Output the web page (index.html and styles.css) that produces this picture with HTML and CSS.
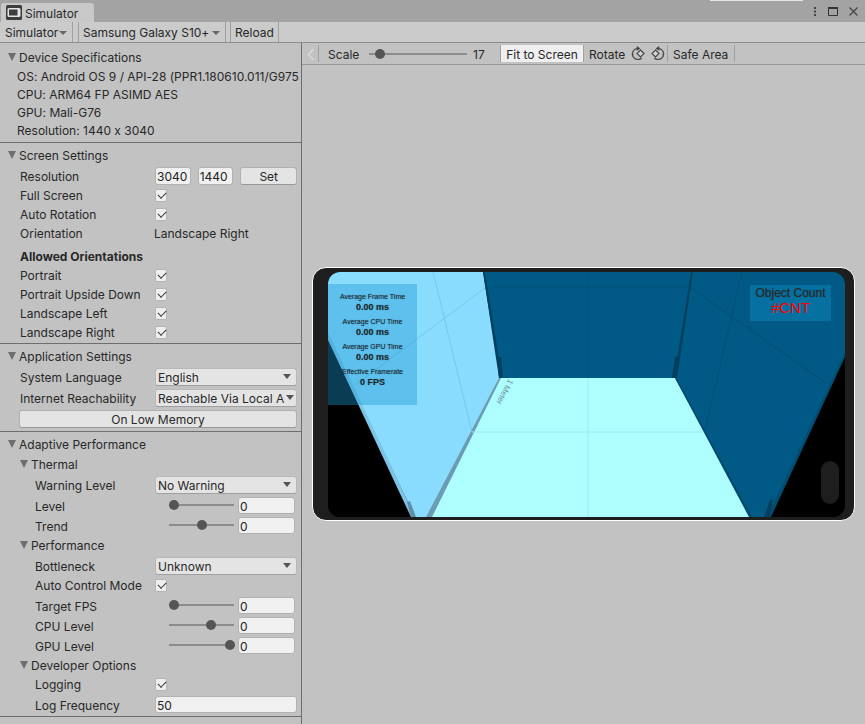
FILE: index.html
```html
<!DOCTYPE html>
<html lang="en">
<head>
<meta charset="utf-8">
<title>Simulator</title>
<link rel="stylesheet" href="styles.css">
</head>
<body>
<div class="window">
  <header class="tabbar">
    <div class="tab">
      <svg class="tab-icon" width="16" height="15" viewBox="0 0 16 15"><rect width="16" height="15" rx="1.5" fill="#3d3d3d"/><rect x="1.500" y="3" width="13" height="9" rx="1.5" fill="#e4e4e4"/><rect x="3" y="4.500" width="8.500" height="6" fill="#3d3d3d"/></svg>
      <span class="tab-label">Simulator</span>
    </div>
    <span class="bleed"></span>
    <div class="win-icons">
      <svg width="4" height="9" viewBox="0 0 4 9"><rect x="1" y="0" width="2" height="2" fill="#444"/><rect x="1" y="3.500" width="2" height="2" fill="#444"/><rect x="1" y="7" width="2" height="2" fill="#444"/></svg>
      <svg width="10" height="9" viewBox="0 0 10 9"><path d="M.5.5h9v8h-9z" fill="none" stroke="#333" stroke-width="1"/><rect y="0" width="10" height="2" fill="#333"/></svg>
      <svg width="9" height="9" viewBox="0 0 9 9"><path d="M.5.5l8 8M8.500.5l-8 8" stroke="#444" stroke-width="1.200" fill="none"/></svg>
    </div>
  </header>

  <nav class="toolbar">
    <div class="tool tool-sim">Simulator<i class="caret small"></i></div>
    <div class="tool tool-device">Samsung Galaxy S10+<i class="caret small"></i></div>
    <div class="tool tool-reload">Reload</div>
  </nav>

  <div class="content">
    <aside class="side">
      <section class="sec sec-device">
        <div class="head"><i class="tri"></i>Device Specifications</div>
        <div class="info">OS: Android OS 9 / API-28 (PPR1.180610.011/G975</div>
        <div class="info">CPU: ARM64 FP ASIMD AES</div>
        <div class="info">GPU: Mali-G76</div>
        <div class="info">Resolution: 1440 x 3040</div>
      </section>

      <section class="sec sec-screen">
        <div class="head"><i class="tri"></i>Screen Settings</div>
        <div class="row r21"><span class="lab">Resolution</span><span class="num w35">3040</span><span class="num w35 gap8">1440</span><span class="btn set">Set</span></div>
        <div class="row"><span class="lab">Full Screen</span><i class="check"></i></div>
        <div class="row"><span class="lab">Auto Rotation</span><i class="check"></i></div>
        <div class="row"><span class="lab">Orientation</span><span class="plain">Landscape Right</span></div>
        <div class="row allowed"><b class="lab">Allowed Orientations</b></div>
        <div class="row"><span class="lab">Portrait</span><i class="check"></i></div>
        <div class="row"><span class="lab">Portrait Upside Down</span><i class="check"></i></div>
        <div class="row"><span class="lab">Landscape Left</span><i class="check"></i></div>
        <div class="row"><span class="lab">Landscape Right</span><i class="check"></i></div>
      </section>

      <section class="sec">
        <div class="head"><i class="tri"></i>Application Settings</div>
        <div class="row r21"><span class="lab">System Language</span><span class="select">English<i class="caret"></i></span></div>
        <div class="row r21"><span class="lab">Internet Reachability</span><span class="select tight">Reachable Via Local A<i class="caret"></i></span></div>
        <div class="row r21"><span class="btn wide">On Low Memory</span></div>
      </section>

      <section class="sec sec-adaptive">
        <div class="head"><i class="tri"></i>Adaptive Performance</div>
        <div class="head sub"><i class="tri"></i>Thermal</div>
        <div class="row r21 deep"><span class="lab">Warning Level</span><span class="select">No Warning<i class="caret"></i></span></div>
        <div class="row r20 deep"><span class="lab">Level</span><span class="slider"><i class="thumb t-min"></i></span><span class="num val">0</span></div>
        <div class="row r20 deep"><span class="lab">Trend</span><span class="slider"><i class="thumb t-mid"></i></span><span class="num val">0</span></div>
        <div class="head sub"><i class="tri"></i>Performance</div>
        <div class="row r21 deep"><span class="lab">Bottleneck</span><span class="select">Unknown<i class="caret"></i></span></div>
        <div class="row deep"><span class="lab">Auto Control Mode</span><i class="check"></i></div>
        <div class="row r20 deep"><span class="lab">Target FPS</span><span class="slider"><i class="thumb t-min"></i></span><span class="num val">0</span></div>
        <div class="row r20 deep"><span class="lab">CPU Level</span><span class="slider"><i class="thumb t-cpu"></i></span><span class="num val">0</span></div>
        <div class="row r20 deep"><span class="lab">GPU Level</span><span class="slider"><i class="thumb t-max"></i></span><span class="num val">0</span></div>
        <div class="head sub"><i class="tri"></i>Developer Options</div>
        <div class="row deep"><span class="lab">Logging</span><i class="check"></i></div>
        <div class="row r21 deep"><span class="lab">Log Frequency</span><span class="num freq">50</span></div>
      </section>
    </aside>

    <main class="main">
      <div class="viewbar">
        <svg class="chev" width="8" height="13" viewBox="0 0 8 13"><path d="M6.500 1L1.500 6.500l5 5.500" fill="none" stroke="#dcdcdc" stroke-width="1.200"/></svg>
        <span class="vsep v1"></span>
        <span class="scale-lab">Scale</span>
        <span class="scale-track"><i class="scale-thumb"></i></span>
        <span class="scale-val">17</span>
        <span class="fit">Fit to Screen</span>
        <span class="rotate">Rotate</span>
        <svg class="rot" width="15" height="15" viewBox="0 0 15 15"><path d="M6.500 2.300A5.600 5.600 0 1 0 10.800 12" fill="none" stroke="#444" stroke-width="1.200"/><path d="M5.800 0l3.600 2.400-3.600 2.400z" fill="#444"/><path d="M9.500 4l3.500 3.500-3.500 3.500L6 7.500z" fill="#d4d4d4" stroke="#444" stroke-width="1.100"/></svg>
        <svg class="rot rot2" width="15" height="15" viewBox="0 0 15 15"><path d="M8.500 2.300A5.600 5.600 0 1 1 4.200 12" fill="none" stroke="#444" stroke-width="1.200"/><path d="M9.200 0L5.600 2.400l3.600 2.400z" fill="#444"/><path d="M5.500 4L9 7.500 5.500 11 2 7.500z" fill="#d4d4d4" stroke="#444" stroke-width="1.100"/></svg>
        <span class="vsep"></span>
        <span class="safe">Safe Area</span>
        <span class="vsep"></span>
      </div>
      <div class="stage">
        <div class="phone">
          <div class="screen">
            <svg class="scene" width="517" height="245" viewBox="328 272 517 245">
              <rect x="328" y="272" width="517" height="245" fill="#000"/>
              <polygon points="483,272 692,272 675,378 500,378" fill="#005a85"/>
              <polygon points="328,272 483,272 500,378 428,517 415,517 328,335" fill="#8adcff"/>
              <polygon points="328,332 415,517 411,517 328,340" fill="#7cc5e6"/>
              <polygon points="692,272 845,272 845,354 770,517 751,517 675,378" fill="#005a85"/>
              <polygon points="500,378 675,378 751,517 428,517" fill="#aefdff"/>
              <polygon points="499,378 501,378 432,517 426,517" fill="#6c9cb4"/>
              <polygon points="483,272 485,272 502,378 499,378" fill="#00405f"/>
              <polygon points="691,272 693,272 677,378 674,378" fill="#00405f"/>
              <polygon points="675,378 677,379 752,517 749,517" fill="#004a6e"/>
              <polygon points="845,352 845,357 771,517 767,517" fill="#024e73"/>
              <polygon points="497,357 501,357 503,378 499,378" fill="#00405f"/>
              <polygon points="675,357 679,356 676,378 672,378" fill="#00405f"/>
              <polygon points="407,502 410,501 416,517 411,517" fill="#5f8fa8"/>
              <polygon points="770,500 773,499 770,517 764,517" fill="#00405f"/>
              <g fill="none" stroke-width="1">
                <path d="M433 272L472 432M485 288L355 385" stroke="#74c6ea"/>
                <path d="M472 432H703M588 378V517" stroke="#9ee8f6"/>
                <path d="M486 287H692" stroke="#034f75"/>
                <path d="M587 272V378" stroke="#01547d"/>
                <path d="M742 272L705 430M690 287L827 384" stroke="#034f75"/>
              </g>
            </svg>
            <span class="meter">1 Meter</span>
            <div class="stats">
              <small>Average Frame Time</small><strong>0.00 ms</strong>
              <small>Average CPU Time</small><strong>0.00 ms</strong>
              <small>Average GPU Time</small><strong>0.00 ms</strong>
              <small>Effective Framerate</small><strong>0 FPS</strong>
            </div>
            <div class="count"><span>Object Count</span><em>#CNT</em></div>
            <div class="cutout"></div>
          </div>
        </div>
      </div>
    </main>
  </div>
</div>
</body>
</html>
```

FILE: styles.css
```css
* { box-sizing: border-box; }
html, body { margin: 0; height: 100%; }
body { background: #c2c2c2; font: 12px/1 Inter, "Liberation Sans", sans-serif; font-feature-settings: "calt" 0; color: #282828; overflow: hidden; }
i { display: block; font-style: normal; }
.window { width: 865px; height: 724px; display: flex; flex-direction: column; overflow: hidden; position: relative; }

.tabbar { height: 22px; flex: none; background: #a3a3a3; display: flex; justify-content: space-between; padding: 3px 0 0 1px; }
.tab { width: 93px; height: 19px; background: #c8c8c8; border-radius: 3px 3px 0 0; display: flex; align-items: flex-start; gap: 3px; padding: 2px 0 0 5px; }
.tab-icon { flex: none; }
.tab-label { padding-top: 3px; }
.bleed { position: absolute; left: 710px; top: 0; width: 93px; height: 1px; background: #e6e6e6; }
.win-icons { display: flex; align-items: center; height: 9px; margin-top: 4px; padding-right: 7px; gap: 11px; }

.toolbar { height: 21px; flex: none; background: #cbcbcb; border-bottom: 1px solid #8e8e8e; display: flex; }
.tool { height: 20px; display: flex; align-items: center; border-right: 1px solid #a0a0a0; padding-top: 2px; }
.tool-sim { width: 73px; padding-left: 5px; }
.tool-device { margin-left: 5px; width: 148px; padding-left: 4px; border-left: 1px solid #a0a0a0; }
.tool-reload { margin-left: 4px; width: 49px; padding-left: 4px; border-left: 1px solid #a0a0a0; }
.caret { width: 0; height: 0; border-left: 4px solid transparent; border-right: 4px solid transparent; border-top: 5px solid #555; margin-left: auto; }
.caret.small { margin: 0 5px 0 auto; border-left-width: 4px; border-right-width: 4px; border-top-width: 4px; border-top-color: #666; }

.content { flex: 1; display: flex; min-height: 0; }
.side { width: 302px; flex: none; border-right: 1px solid #6e6e6e; }
.sec { border-bottom: 1px solid #6e6e6e; padding: 2px 4px 2px 0; }
.sec-device { padding: 4px 0 3px; white-space: nowrap; }
.sec-screen { padding-bottom: 1px; }
.sec-adaptive { padding-bottom: 1px; }

.head { height: 20px; display: flex; align-items: center; padding: 2px 0 0 8px; }
.head.sub { padding-left: 20px; }
.tri { width: 0; height: 0; border-left: 4px solid transparent; border-right: 4px solid transparent; border-top: 8px solid #6e6e6e; margin: 0 3px 2px 0; }
.info { height: 18px; line-height: 18px; padding: 1px 0 0 17px; }

.row { height: 19px; display: flex; align-items: center; padding-left: 20px; white-space: nowrap; }
.r20 { height: 20px; }
.r21 { height: 21px; }
.row.deep { padding-left: 35px; }
.allowed { margin-top: 4px; }
.lab { flex: none; width: 135px; }
.r21 .lab { padding-top: 2px; }
.r20 .lab { padding-top: 4px; }
.deep .lab { width: 120px; }
b.lab { font-weight: 700; width: auto; }
.plain { margin-left: -1px; }

.check { width: 12px; height: 13px; background: #efefef; border: 1px solid #b4b4b4; border-radius: 2px; position: relative; }
.check::after { content: ""; position: absolute; left: 2px; top: 2px; width: 6.500px; height: 3.500px; border-left: 1.300px solid #333; border-bottom: 1.300px solid #333; transform: rotate(-45deg); }

.num { height: 17px; background: #f0f0f0; border: 1px solid #b2b2b2; border-radius: 3px; display: flex; align-items: center; padding: 2px 0 0 1px; color: #222; }
.w35 { width: 36px; height: 18px; }
.gap8 { margin-left: 7px; }
.val { width: 57px; margin-left: 4px; padding-top: 4px; }
.freq { width: 142px; }
.btn { height: 18px; background: #e4e4e4; border: 1px solid #b0b0b0; border-bottom-color: #999; border-radius: 3px; display: flex; align-items: center; justify-content: center; padding-top: 2px; }
.set { width: 57px; margin-left: 7px; }
.wide { width: 278px; margin-left: -1px; }
.select { width: 142px; height: 18px; background: #e4e4e4; border: 1px solid #b8b8b8; border-bottom-color: #a0a0a0; border-radius: 3px; display: flex; align-items: center; padding: 2px 5px 0 2px; }
.select .caret { margin-left: auto; margin-top: -2px; }
.select.tight { padding-right: 1px; }
.select.tight .caret { margin-left: 2px; }

.slider { width: 65px; height: 2px; background: #8c8c8c; margin-left: 14px; position: relative; }
.thumb { width: 10px; height: 10px; border-radius: 50%; background: #555; position: absolute; top: -4px; }
.t-min { left: 0; }
.t-mid { left: 28px; }
.t-cpu { left: 37px; }
.t-max { left: 56px; }

.main { flex: 1; min-width: 0; display: flex; flex-direction: column; }
.viewbar { height: 22px; flex: none; border-bottom: 1px solid #9a9a9a; display: flex; align-items: center; padding-left: 5px; }
.chev { flex: none; margin-top: 1px; }
.vsep { width: 1px; height: 17px; background: #a0a0a0; flex: none; }
.v1 { margin-left: 3px; }
.scale-lab { margin-left: 9px; padding-top: 3px; width: 41px; }
.scale-track { width: 98px; height: 2px; background: #8c8c8c; position: relative; }
.scale-thumb { position: absolute; left: 6px; top: -4px; width: 10px; height: 10px; border-radius: 50%; background: #555; }
.scale-val { margin-left: 6px; width: 27px; padding-top: 3px; }
.fit { width: 84px; height: 17px; padding-top: 3px; background: #efefef; border-left: 1px solid #a0a0a0; border-right: 1px solid #a0a0a0; display: flex; align-items: center; justify-content: center; }
.rotate { margin-left: 5px; width: 42px; padding-top: 3px; }
.rot { flex: none; }
.rot2 { margin-left: 4px; margin-right: 2px; }
.safe { width: 66px; padding: 3px 0 0 5px; }

.stage { flex: 1; display: flex; align-items: center; justify-content: center; padding-bottom: 1px; }
.phone { width: 543px; height: 254px; background: #1e1e1e; border: 1px solid #fff; border-radius: 14px; padding: 4px 9px 4px 15px; }
.screen { width: 517px; height: 245px; position: relative; border-radius: 12px; overflow: hidden; background: #000; }
.scene { display: block; }
.meter { position: absolute; left: 187px; top: 110px; font: 8px "Liberation Sans", sans-serif; color: #6a8ea0; transform: rotate(118deg); transform-origin: 0 0; white-space: nowrap; }
.stats { position: absolute; left: 0; top: 12px; width: 89px; height: 121px; background: rgba(25,150,209,.4); display: flex; flex-direction: column; align-items: center; padding-top: 7px; font-family: "Liberation Sans", sans-serif; color: #1f2a30; text-shadow: 0 0 1px rgba(20,30,40,.45); }
.stats small { font-size: 7px; height: 11px; line-height: 11px; }
.stats strong { font-size: 9px; font-weight: 700; height: 11px; line-height: 11px; margin-bottom: 3px; }
.count { position: absolute; left: 422px; top: 13px; width: 81px; height: 36px; background: #0670a0; display: flex; flex-direction: column; align-items: center; padding-top: 2px; font-family: "Liberation Sans", sans-serif; font-size: 12px; line-height: 13px; color: #2a2a2a; text-shadow: 0 0 1px rgba(30,30,30,.5); }
.count em { font-style: normal; font-size: 15px; color: #f00; line-height: 15px; text-shadow: none; }
.cutout { position: absolute; left: 493px; top: 189px; width: 18px; height: 43px; border-radius: 9px; background: #1e1e1e; }
```
